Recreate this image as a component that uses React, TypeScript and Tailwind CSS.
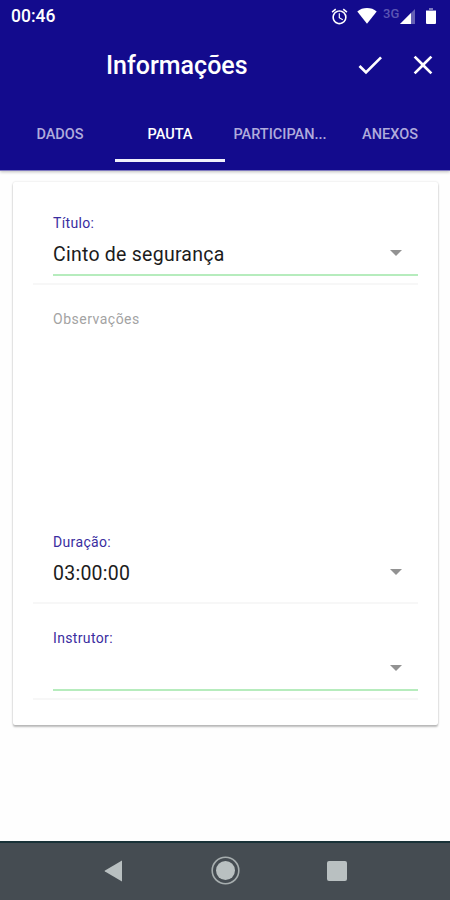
import React, { useState } from 'react';
import clsx from 'clsx';
import { MdAlarm, MdCheck, MdClose } from 'react-icons/md';

const TABS = ['DADOS', 'PAUTA', 'PARTICIPAN...', 'ANEXOS'];

function StatusBar() {
  return (
    <div className="flex h-8 items-center justify-between pl-[11px] pr-[14px] text-white">
      <span className="text-[17.500px] leading-8 font-medium">00:46</span>
      <div className="flex h-8 items-center">
        <MdAlarm className="mr-[8px] h-[19px] w-[19px]" />
        <svg className="mr-[6px] h-4 w-5" viewBox="0 0 20 16" fill="currentColor">
          <path d="M.3 3.4C3 1.1 6.3 0 10 0s7 1.1 9.7 3.4L10 15.8z" />
        </svg>
        <span className="mb-[5px] w-[17px] text-[13px] leading-3 font-medium text-[#5b55b4]">3G</span>
        <svg className="mr-[11px] h-[15px] w-[15px]" viewBox="0 0 15 15" fill="currentColor">
          <path d="M15 0v15H0z" opacity=".35" />
          <path d="M11 4v11H0z" />
        </svg>
        <svg className="h-4 w-[10px]" viewBox="0 0 10 16" fill="currentColor">
          <path d="M3 0h4v2h3v1.500H0V2h3z" opacity=".45" />
          <path d="M0 3h10v12a1 1 0 0 1-1 1H1a1 1 0 0 1-1-1z" />
        </svg>
      </div>
    </div>
  );
}

interface FieldProps {
  label: string;
  value?: string;
  underline?: boolean;
}

function SelectField({ label, value, underline }: FieldProps) {
  return (
    <div className="flex h-[96px] flex-col border-b-2 border-[#f7f7f7] pl-[20px]">
      <span className="mt-[24px] h-5 text-[14px] leading-5 tracking-[0.35px] text-[#3a2d9f]">{label}</span>
      <div
        className={clsx(
          'flex h-[43px] items-start justify-between border-b-2 pr-[16px]',
          underline ? 'border-[#b6ecbd]' : 'border-transparent',
        )}
      >
        <span className="pt-[10px] text-[19.500px] leading-6 tracking-[0.25px] text-[#1c1c1c]">{value}</span>
        <svg className="mt-[17px] h-[6px] w-3" viewBox="0 0 12 6" fill="#929292">
          <path d="M0 0h12L6 6z" />
        </svg>
      </div>
    </div>
  );
}

export default function App() {
  const [active, setActive] = useState(1);

  return (
    <div className="flex h-[900px] w-[450px] flex-col overflow-hidden bg-[#fefefe] font-['Roboto',sans-serif]">
      <header className="h-[171px] shrink-0 border-b border-[#7f79bf] bg-[#130b8d] shadow-[0_1px_3px_rgba(0,0,0,0.25)]">
        <StatusBar />
        <div className="flex h-[66px] items-center pl-[106px] pr-[11px] text-white">
          <h1 className="flex-1 pt-[2px] text-[25px] leading-[64px] font-medium">Informações</h1>
          <button type="button" aria-label="Confirmar" className="mr-[21px]">
            <MdCheck className="h-8 w-8" />
          </button>
          <button type="button" aria-label="Fechar">
            <MdClose className="h-8 w-8" />
          </button>
        </div>
        <nav className="grid h-[64px] grid-cols-4 px-[5px]">
          {TABS.map((tab, i) => (
            <button
              key={tab}
              type="button"
              onClick={() => setActive(i)}
              className={clsx(
                'border-b-[3px] pt-[13px] text-[14.500px] leading-5 font-medium',
                i === active ? 'border-[#f0f0fb] text-white' : 'border-transparent text-[#b0abdc]',
              )}
            >
              {tab}
            </button>
          ))}
        </nav>
      </header>

      <main className="flex-1 pl-[13px] pr-[12px] pt-[11px]">
        <section className="h-[543px] rounded-[2px] bg-white pl-[20px] pr-[20px] pt-[7px] shadow-[0_2px_2px_rgba(0,0,0,0.25),0_0_2px_rgba(0,0,0,0.16)]">
          <SelectField label="Título:" value="Cinto de segurança" underline />
          <div className="h-[223px] pt-[24px] pl-[20px] text-[14px] leading-5 tracking-[0.5px] text-[#a3a3a3]">
            Observações
          </div>
          <SelectField label="Duração:" value="03:00:00" />
          <SelectField label="Instrutor:" underline />
        </section>
      </main>

      <footer className="flex h-[59px] shrink-0 items-center border-t-2 border-[#193238] bg-[#454c52] pb-[2px]">
        <svg className="ml-[104px] h-[22px] w-[19px]" viewBox="0 0 19 22" fill="#b9c0c1">
          <path d="M18 .5v21L1 11.600q-1-.6 0-1.200z" />
        </svg>
        <svg className="ml-[88px] h-[29px] w-[29px]" viewBox="0 0 29 29">
          <circle cx="14.500" cy="14.500" r="13.300" fill="none" stroke="#a6adae" strokeWidth="1.600" />
          <circle cx="14.500" cy="14.500" r="9.500" fill="#b9c0c1" />
        </svg>
        <div className="ml-[87px] h-5 w-5 rounded-[2px] bg-[#b9c0c1]" />
      </footer>
    </div>
  );
}
